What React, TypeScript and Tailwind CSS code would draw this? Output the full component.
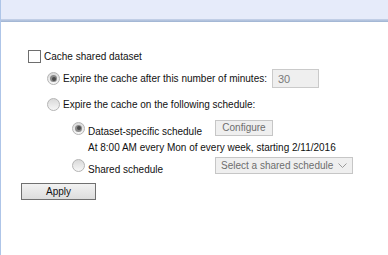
import React from 'react';

const font = { fontFamily: '"Liberation Sans", Arial, sans-serif' };

function Radio({ checked }: { checked?: boolean }) {
  return (
    <span className="w-[13px] h-[13px] shrink-0 rounded-full border border-[#b4b4b4] bg-gradient-to-b from-[#d9d9d9] to-[#f7f7f7] flex items-center justify-center">
      {checked && (
        <span className="w-[7px] h-[7px] rounded-full bg-[#8a8a8a] flex items-center justify-center">
          <span className="w-[4px] h-[4px] rounded-full bg-[#4a4a4a]"></span>
        </span>
      )}
    </span>
  );
}

export default function App() {
  return (
    <div className="w-[388px] h-[255px] bg-white border-l border-[#aec5e8] text-[10px] leading-[12px] text-[#111] overflow-hidden" style={font}>
      {/* Header strip */}
      <div className="h-[19px] bg-[#e6ebfa]"></div>
      <div className="h-[3px] bg-gradient-to-b from-[#c8d4ea] to-[#9db2d1]"></div>

      <div className="pl-[20px] pt-[28px] flex flex-col">
        <div className="flex items-center h-[13px] ml-[7px]">
          <span className="w-[13px] h-[13px] border border-[#6e6e6e] bg-white shrink-0"></span>
          <span className="ml-[3px]">Cache shared dataset</span>
        </div>

        <div className="flex items-center h-[19px] mt-[6px] ml-[26px]">
          <Radio checked />
          <span className="ml-[3px]">Expire the cache after this number of minutes:</span>
          <div className="ml-[5px] w-[47px] h-[19px] border border-[#cacaca] bg-[#efefef] text-[#7a7a7a] text-[11px] flex items-center pl-[5px]">
            30
          </div>
        </div>

        <div className="flex items-center h-[13px] mt-[10px] ml-[26px]">
          <Radio />
          <span className="ml-[3px]">Expire the cache on the following schedule:</span>
        </div>

        <div className="flex items-center h-[16px] mt-[9px] ml-[51px]">
          <Radio checked />
          <span className="ml-[3px] w-[127px] pt-[7px]">Dataset-specific schedule</span>
          <div className="w-[58px] h-[16px] border border-[#c6c6c6] bg-[#efefef] text-[#6d6d6d] flex items-center justify-center">
            Configure
          </div>
        </div>

        <div className="mt-[6px] ml-[67px]">At 8:00 AM every Mon of every week, starting 2/11/2016</div>

        <div className="flex items-center h-[17px] mt-[3px] ml-[51px]">
          <Radio />
          <span className="ml-[3px] w-[127px] pt-[8px]">Shared schedule</span>
          <div className="w-[138px] h-[17px] border border-[#c6c6c6] bg-[#efefef] text-[#6d6d6d] flex items-center justify-between pl-[5px] pr-[5px]">
            <span>Select a shared schedule</span>
            <svg width="9" height="6" viewBox="0 0 9 6" fill="none">
              <path d="M0.5 0.5 L4.5 4.5 L8.5 0.5" stroke="#9a9a9a" strokeWidth="1" />
            </svg>
          </div>
        </div>

        <div className="mt-[9px] w-[75px] h-[17px] border border-[#707070] bg-gradient-to-b from-[#f2f2f2] to-[#dddddd] flex items-center justify-center">
          Apply
        </div>
      </div>
    </div>
  );
}
